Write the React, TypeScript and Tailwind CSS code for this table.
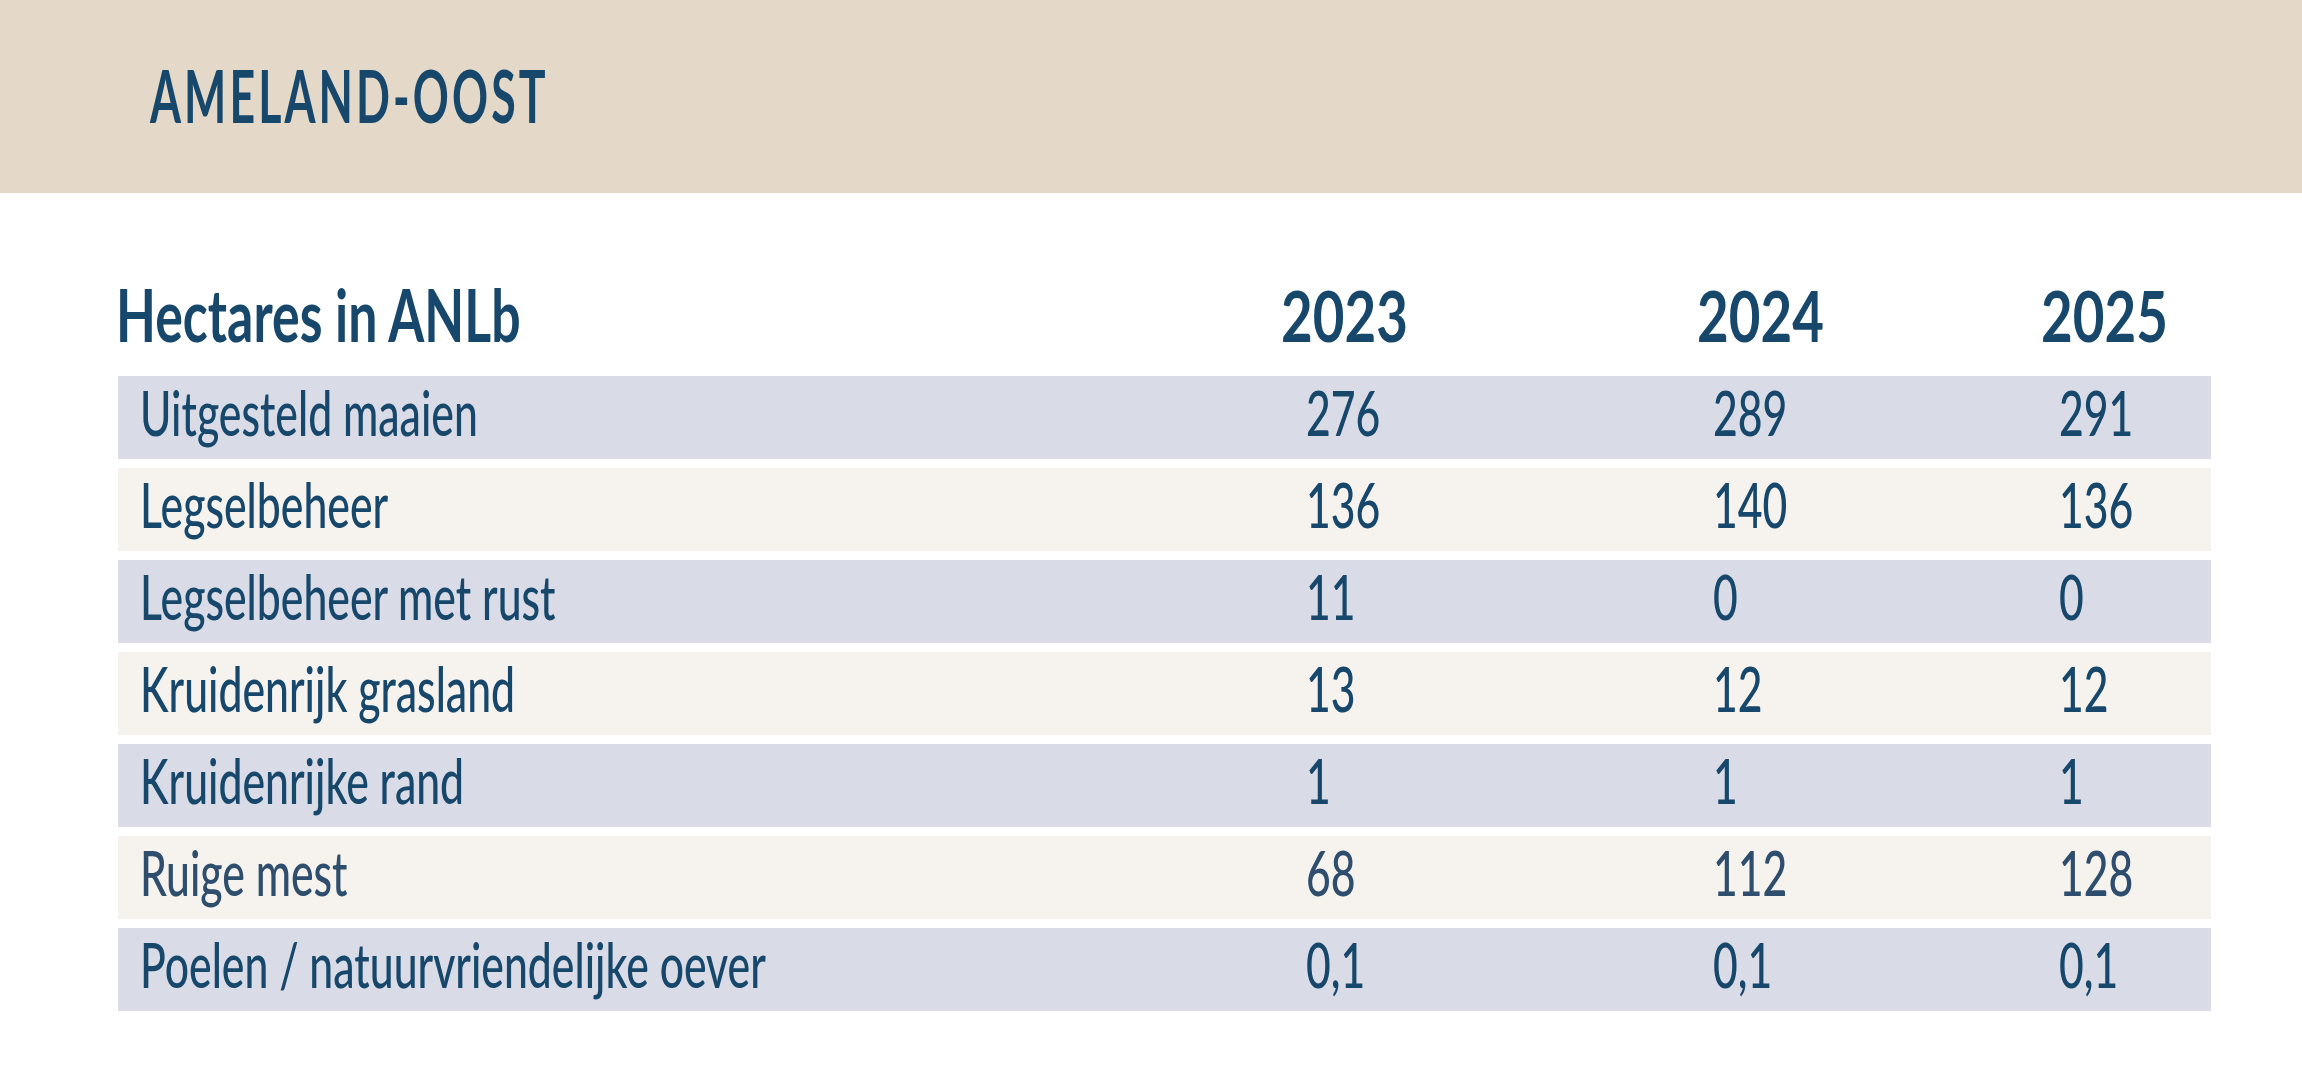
import React from 'react';

const ROWS = [
  { label: 'Uitgesteld maaien', values: ['276', '289', '291'] },
  { label: 'Legselbeheer', values: ['136', '140', '136'] },
  { label: 'Legselbeheer met rust', values: ['11', '0', '0'] },
  { label: 'Kruidenrijk grasland', values: ['13', '12', '12'] },
  { label: 'Kruidenrijke rand', values: ['1', '1', '1'] },
  { label: 'Ruige mest', values: ['68', '112', '128'], soft: true },
  { label: 'Poelen / natuurvriendelijke oever', values: ['0,1', '0,1', '0,1'] },
];

// condensed look: Lato squeezed horizontally
function Narrow({ children, className = '' }: { children: React.ReactNode; className?: string }) {
  return <span className={`inline-block origin-left whitespace-nowrap ${className}`}>{children}</span>;
}

export default function App() {
  return (
    <div className="w-[2302px] h-[1078px] bg-white text-[#17476b] font-['Lato','Liberation_Sans',sans-serif] overflow-hidden">
      <header className="h-[193px] bg-[#e4d9c8] pl-[150px] pt-[59px]">
        <h1 className="text-[72px] leading-[72px] font-bold tracking-[5px]">
          <Narrow className="scale-x-[0.62]">AMELAND-OOST</Narrow>
        </h1>
      </header>

      <section className="pl-[118px] pr-[91px] pt-[85px]">
        <div className="grid grid-cols-[1188px_407px_346px_152px] items-baseline h-[98px]">
          <h2 className="text-[72px] leading-[72px] font-bold -ml-[2px]">
            <Narrow className="scale-x-[0.72]">Hectares in ANLb</Narrow>
          </h2>
          <div className="text-[71px] leading-[72px] font-bold -ml-[25px]">
            <Narrow className="scale-x-[0.77]">2023</Narrow>
          </div>
          <div className="text-[71px] leading-[72px] font-bold -ml-[16px]">
            <Narrow className="scale-x-[0.77]">2024</Narrow>
          </div>
          <div className="text-[71px] leading-[72px] font-bold -ml-[18px]">
            <Narrow className="scale-x-[0.77]">2025</Narrow>
          </div>
        </div>

        <div className="flex flex-col gap-[9px]">
          {ROWS.map((row, i) => (
            <div
              key={row.label}
              className={`grid grid-cols-[1188px_407px_346px_152px] h-[83px] pt-[6px] text-[61px] leading-[61px] font-medium ${
                i % 2 === 0 ? 'bg-[#d9dce6]' : 'bg-[#f6f3ef]'
              } ${row.soft ? 'text-[#2f4e6e]' : ''}`}
            >
              <div className="pl-[22px]">
                <Narrow className="scale-x-[0.7]">{row.label}</Narrow>
              </div>
              {row.values.map((v, j) => (
                <div key={j}>
                  <Narrow className="scale-x-[0.7]">{v}</Narrow>
                </div>
              ))}
            </div>
          ))}
        </div>
      </section>
    </div>
  );
}
